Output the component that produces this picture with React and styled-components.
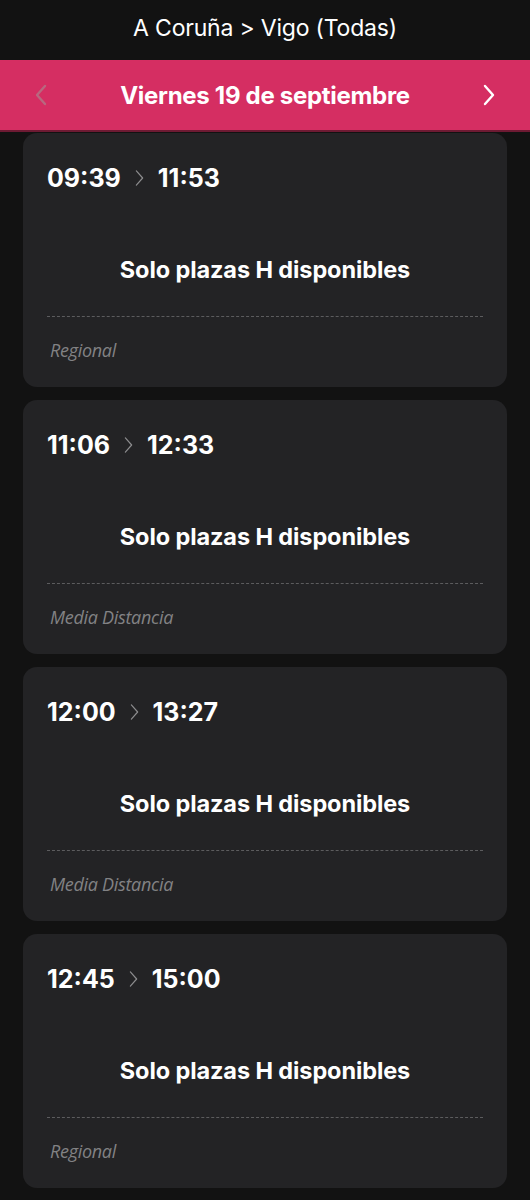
import React from "react";
import styled, { createGlobalStyle } from "styled-components";

const GlobalStyle = createGlobalStyle`
  html, body {
    margin: 0;
    padding: 0;
    background: #121212;
  }
  body {
    font-family: Inter, "Liberation Sans", sans-serif;
    color: #ffffff;
  }
`;

const trips = [
  { from: "09:39", to: "11:53", type: "Regional" },
  { from: "11:06", to: "12:33", type: "Media Distancia" },
  { from: "12:00", to: "13:27", type: "Media Distancia" },
  { from: "12:45", to: "15:00", type: "Regional" },
  { from: "13:20", to: "15:31", type: "Regional" },
];

function Chevron({ color, width = 2.4 }) {
  return (
    <svg
      width="100%"
      height="100%"
      viewBox="0 0 14 22"
      fill="none"
      style={{ display: "block" }}
    >
      <path
        d="M3 2 L11 11 L3 20"
        stroke={color}
        strokeWidth={width}
        strokeLinecap="round"
        strokeLinejoin="round"
      />
    </svg>
  );
}

function App() {
  return (
    <>
      <GlobalStyle />
      <StPage>
        <StHeader>A Coruña &gt; Vigo (Todas)</StHeader>
        <StDateBar>
          <StNavBtn $flip>
            <Chevron color="#b8687f" />
          </StNavBtn>
          <StDate>Viernes 19 de septiembre</StDate>
          <StNavBtn>
            <Chevron color="#ffffff" />
          </StNavBtn>
        </StDateBar>
        <StList>
          {trips.map((t, i) => (
            <StCard key={i}>
              <StTimes>
                <span>{t.from}</span>
                <StArrow>
                  <Chevron color="#8d8d8f" width={1.5} />
                </StArrow>
                <span>{t.to}</span>
              </StTimes>
              <StMessage>Solo plazas H disponibles</StMessage>
              <StDivider />
              <StType>{t.type}</StType>
            </StCard>
          ))}
        </StList>
      </StPage>
    </>
  );
}

export default App;

const StPage = styled.div`
  width: 530px;
  height: 1200px;
  overflow: hidden;
  background: #121212;
`;

const StHeader = styled.div`
  height: 60px;
  display: flex;
  align-items: center;
  justify-content: center;
  font-size: 23px;
  font-weight: 400;
  letter-spacing: -0.2px;
  padding-bottom: 4px;
  box-sizing: border-box;
`;

const StDateBar = styled.div`
  height: 70px;
  background: #d52e62;
  border-bottom: 2px solid #6e1a33;
  display: flex;
  align-items: center;
  justify-content: space-between;
  padding: 0 34px 0 34px;
`;

const StNavBtn = styled.div`
  width: 14px;
  height: 22px;
  transform: ${(props) => (props.$flip ? "scaleX(-1)" : "none")};
`;

const StDate = styled.div`
  font-size: 24px;
  font-weight: 700;
  letter-spacing: -0.3px;
`;

const StList = styled.div`
  display: flex;
  flex-direction: column;
  gap: 13px;
  padding: 1px 23px 0 23px;
`;

const StCard = styled.div`
  background: #232325;
  border-radius: 14px;
  height: 254px;
  box-sizing: border-box;
  padding: 28px 24px 0 24px;
  display: flex;
  flex-direction: column;
  flex-shrink: 0;
`;

const StTimes = styled.div`
  display: flex;
  align-items: center;
  gap: 13px;
  font-size: 25px;
  font-weight: 700;
  height: 34px;
  letter-spacing: 0px;
`;

const StArrow = styled.div`
  width: 11px;
  height: 20px;
`;

const StMessage = styled.div`
  margin-top: 60px;
  text-align: center;
  font-size: 23.5px;
  font-weight: 700;
  letter-spacing: -0.1px;
  height: 30px;
  line-height: 30px;
`;

const StDivider = styled.div`
  margin-top: 31px;
  border-top: 1px dashed #5c5c5e;
`;

const StType = styled.div`
  margin-top: 21px;
  padding-left: 3px;
  font-family: "Open Sans", "Liberation Sans", sans-serif;
  font-style: italic;
  font-size: 18px;
  color: #828284;
  letter-spacing: -0.3px;
`;
